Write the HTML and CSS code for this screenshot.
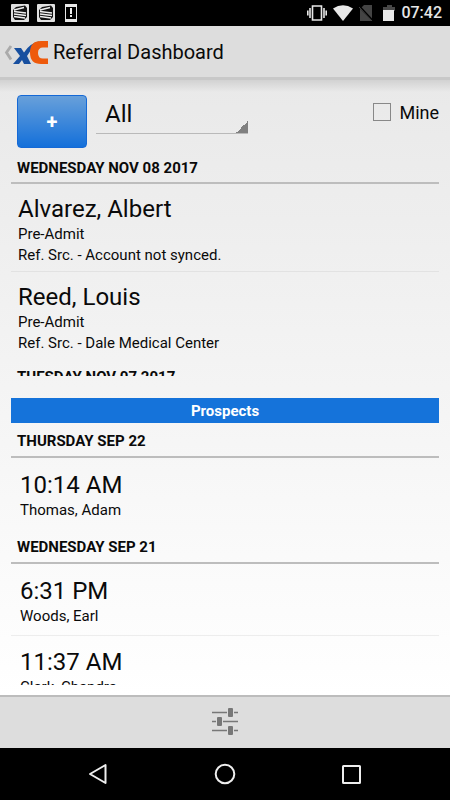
FILE: index.html
```html
<!DOCTYPE html>
<html lang="en">
<head>
<meta charset="utf-8">
<meta name="viewport" content="width=device-width, initial-scale=1">
<title>Referral Dashboard</title>
<link rel="stylesheet" href="styles.css">
</head>
<body>
<div class="status">
  <div class="status-group notices">
    <svg width="18" height="18" viewBox="0 0 18 18"><rect width="18" height="18" rx="1" fill="#e0e0e0"/><path d="M2 6l3-3 9-1.500 2 2.500v9l-3 3H4l-2-3z" fill="#111"/><path d="M3 6l10-2.500M3 7.500l12 1.500M3 10l12 1.500M3 12.500L14 14" stroke="#f0f0f0" stroke-width="1.400" fill="none"/></svg>
    <svg width="18" height="18" viewBox="0 0 18 18"><rect width="18" height="18" rx="1" fill="#e0e0e0"/><path d="M2 6l3-3 9-1.500 2 2.500v9l-3 3H4l-2-3z" fill="#111"/><path d="M3 6l10-2.500M3 7.500l12 1.500M3 10l12 1.500M3 12.500L14 14" stroke="#f0f0f0" stroke-width="1.400" fill="none"/></svg>
    <svg class="alert" width="12" height="18" viewBox="0 0 12 18"><rect width="12" height="18" fill="#e8e8e8"/><rect x="1" y="3" width="10" height="12" fill="#000"/><path d="M6 4v6M6 11v2" stroke="#eee" stroke-width="2"/></svg>
  </div>
  <div class="status-group">
    <svg width="20" height="16" viewBox="0 0 20 16"><path d="M5.500 1h9v14h-9zM3 3v10M17 3v10M.8 5.500v5M19.200 5.500v5" fill="none" stroke="#e8e8e8" stroke-width="1.600"/></svg>
    <svg width="20" height="16" viewBox="0 0 20 16"><path d="M0 3.500Q10-3 20 3.500L10 16z" fill="#e8e8e8"/></svg>
    <svg width="14" height="16" viewBox="0 0 14 16"><path d="M5 0h8v16H1V4z" fill="#444"/><path d="M0 1l14 15" stroke="#000" stroke-width="2"/><path d="M0 2l13 14" stroke="#444"/></svg>
    <svg class="battery" width="12" height="16" viewBox="0 0 12 16"><path d="M4 0h5v2h3v4H0V2h4z" fill="#484848"/><path d="M0 5h11v11H0z" fill="#e8e8e8"/></svg>
    <time>07:42</time>
  </div>
</div>
<header class="appbar">
  <a class="home" href="#" aria-label="Back">
    <svg width="44" height="26" viewBox="0 0 44 26"><path d="M7 7L2.500 13.500 7 20.500" fill="none" stroke="#aaa" stroke-width="2.800"/><path d="M10 9h7l3 4.500Q26 4 36 2q-6 3-9 9l-4 6 4 8h-7l-2-4-3 4H9l7-8z" fill="#174f9f"/><path d="M44 2v6.500h-5q-5 0-5 5.500t5 5.500h5V25h-7q-11 0-11-11.500Q26 2 37 2z" fill="#ee5a0c"/></svg>
  </a>
  <h1>Referral Dashboard</h1>
</header>
<main>
  <div class="controls">
    <button class="add" type="button" aria-label="Add referral">+</button>
    <select class="filter" aria-label="Filter"><option>All</option></select>
    <label class="mine"><input type="checkbox">Mine</label>
  </div>
  <section class="list referrals">
    <h2>WEDNESDAY NOV 08 2017</h2>
    <article><h3>Alvarez, Albert</h3><p>Pre-Admit</p><p>Ref. Src. - Account not synced.</p></article>
    <article><h3>Reed, Louis</h3><p>Pre-Admit</p><p>Ref. Src. - Dale Medical Center</p></article>
    <h2>TUESDAY NOV 07 2017</h2>
  </section>
  <h2 class="banner">Prospects</h2>
  <section class="list prospects">
    <h2>THURSDAY SEP 22</h2>
    <article><h3>10:14 AM</h3><p>Thomas, Adam</p></article>
    <h2>WEDNESDAY SEP 21</h2>
    <article><h3>6:31 PM</h3><p>Woods, Earl</p></article>
    <article><h3>11:37 AM</h3><p>Clark, Chandra</p></article>
  </section>
</main>
<footer class="tools">
  <button type="button" aria-label="Filters">
    <svg width="28" height="28" viewBox="0 0 28 28"><path d="M1 5.500h15M23 5.500h4M1 14.500h4M12 14.500h15M1 23.500h15M23 23.500h4" stroke="#777" stroke-width="1.600"/><g fill="#777"><rect x="17" y="1" width="5" height="9" rx="1"/><rect x="6" y="10" width="5" height="9" rx="1"/><rect x="17" y="19" width="5" height="9" rx="1"/></g></svg>
  </button>
</footer>
<nav class="nav" aria-label="System">
  <button type="button" aria-label="Back"><svg width="22" height="22" viewBox="0 0 22 22"><path d="M18.500 2v18L3 11z"/></svg></button>
  <button type="button" aria-label="Home"><svg width="22" height="22" viewBox="0 0 22 22"><circle cx="11" cy="11" r="9.300"/></svg></button>
  <button type="button" aria-label="Recent"><svg width="22" height="22" viewBox="0 0 22 22"><rect x="2" y="3" width="17" height="17" rx=".5"/></svg></button>
</nav>
</body>
</html>
```
FILE: styles.css
```css
* { box-sizing: border-box; }
body {
  margin: 0;
  height: 100vh;
  display: flex;
  flex-direction: column;
  font-family: Roboto, "Liberation Sans", sans-serif;
  color: #0a0a0a;
  background: #000;
}
h1, h2, h3, p { margin: 0; font-weight: 400; }
button { border: 0; padding: 0; background: none; font: inherit; }
svg { display: block; }

.status {
  display: flex;
  justify-content: space-between;
  align-items: center;
  height: 26px;
  flex-shrink: 0;
  padding: 0 8px 0 11px;
  color: #e6e6e6;
}
.status-group { display: flex; align-items: center; gap: 6px; }
.notices { gap: 8px; }
.alert { margin-left: 2px; }
.battery { margin-left: 4px; }
.status time { font-size: 16px; font-weight: 500; line-height: 20px; }

.appbar {
  display: flex;
  align-items: center;
  gap: 5px;
  height: 54px;
  flex-shrink: 0;
  padding-left: 4px;
  background: #ddd;
  border-bottom: 3px solid #c8c8c8;
}
.appbar h1 { font-size: 20px; line-height: 28px; }

main {
  flex: 1;
  min-height: 0;
  display: flex;
  flex-direction: column;
  padding: 0 11px 10px;
  background:
    linear-gradient(#d2d2d2, rgba(232, 232, 232, 0)) 0 0 / 100% 12px no-repeat,
    linear-gradient(#e9e9e9, #fff);
}
.controls {
  display: flex;
  align-items: flex-start;
  height: 70px;
  flex-shrink: 0;
  padding: 15px 0 0 6px;
}
.add {
  width: 70px;
  height: 53px;
  border: 1px solid #1569d6;
  border-radius: 4px;
  background: linear-gradient(#68a0da, #1470da);
  color: #fff;
  font-size: 20px;
  font-weight: 700;
}
.filter {
  appearance: none;
  flex: 0 1 152px;
  height: 39px;
  margin-left: 9px;
  padding: 0 9px;
  border: 0;
  border-bottom: 1px solid #b9b9b9;
  border-radius: 0;
  background: linear-gradient(135deg, transparent 50%, #808080 50%) 100% 100% / 13px 13px no-repeat border-box;
  font: 24px/38px Roboto, "Liberation Sans", sans-serif;
  color: inherit;
}
.mine {
  display: flex;
  align-items: center;
  gap: 8px;
  height: 34px;
  margin-left: auto;
  font-size: 18px;
}
.mine input {
  appearance: none;
  width: 18px;
  height: 18px;
  margin: 0;
  border: 1px solid #888;
}

.list { min-height: 0; overflow: hidden; }
.referrals { flex: 226 1 0; }
.prospects { flex: 262 1 0; }
.list h2 {
  height: 34px;
  padding: 8px 6px 0;
  border-bottom: 2px solid #bdbdbd;
  font-size: 15px;
  line-height: 20px;
  font-weight: 700;
}
.list article { padding: 10px 7px 5px; }
.list article + article { border-top: 1px solid #e2e2e2; }
.list h3 { font-size: 24px; line-height: 30px; }
.list p { font-size: 15px; line-height: 21px; }
.prospects h2 { height: 35px; }
.prospects article { padding: 12px 9px 8px; }
.prospects article + article { padding-top: 11px; border-color: #ededed; }
.banner {
  flex-shrink: 0;
  height: 25px;
  margin-top: 22px;
  background: #1573da;
  color: #fff;
  text-align: center;
  font-size: 15px;
  font-weight: 700;
  line-height: 26px;
}

.tools {
  display: flex;
  justify-content: center;
  align-items: center;
  height: 53px;
  flex-shrink: 0;
  padding-bottom: 3px;
  background: #ddd;
  border-top: 2px solid #bcbcbc;
}
.nav {
  display: flex;
  justify-content: center;
  align-items: center;
  gap: 105px;
  height: 52px;
  flex-shrink: 0;
}
.nav svg { fill: none; stroke: #eee; stroke-width: 2; stroke-linejoin: round; }
```
